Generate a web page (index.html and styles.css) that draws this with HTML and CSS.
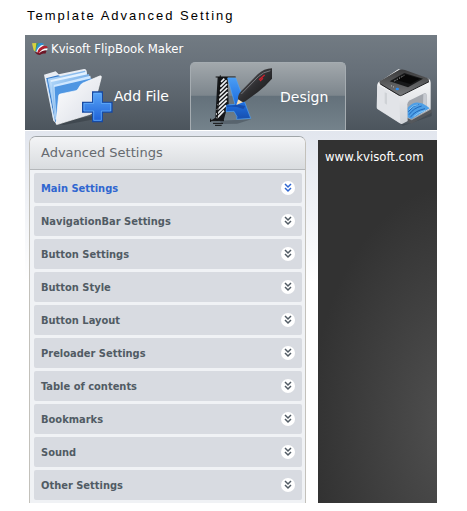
FILE: index.html
```html
<!DOCTYPE html>
<html lang="en">
<head>
    <meta charset="UTF-8">
    <meta name="viewport" content="width=device-width, initial-scale=1.0">
    <title>Template Advanced Setting</title>
    <link rel="stylesheet" href="styles.css">
</head>
<body>
    <h1 class="page-title">Template Advanced Setting</h1>
    <div class="app">
        <header class="app-header">
            <div class="title-bar">
                <svg class="logo" viewBox="93 123 54 42" aria-hidden="true">
                    <path d="M96 127l13-1 2 5-4 21-6-4z" fill="#d8d23e"/>
                    <path d="M109 127l7 0-5 27-5-3z" fill="#3f9a55"/>
                    <path d="M116 127c7-2 14-1 17 3-9 1-15 9-20 25l-6-4c2-12 4-19 9-24z" fill="#2f8fd0"/>
                    <path d="M118 138c3-5 8-7 15-7-8 5-14 13-18 25l-6-3c2-7 5-12 9-15z" fill="#f4f7fa"/>
                    <path d="M112 155c4-15 15-22 29-19l2 5c-12-1-20 5-25 18z" fill="#b4202f"/>
                    <path d="M117 157c6-10 14-15 26-14l-2 5c-9 0-15 3-20 11z" fill="#fff"/>
                    <path d="M104 152l14 5c6-7 12-9 22-8l-4 9c-8-2-12 1-16 4-6 0-13-4-16-10z" fill="#6d1526"/>
                </svg>
                <span>Kvisoft FlipBook Maker</span>
            </div>
            <nav class="tabs">
                <button type="button" class="tab tab-add">
                    <svg class="tab-icon" viewBox="51 30 216 180" aria-hidden="true">
                        <defs>
                            <linearGradient id="paper" x1="0" y1="0" x2="1" y2="1">
                                <stop offset="0" stop-color="#fff"/>
                                <stop offset="1" stop-color="#d8dce5"/>
                            </linearGradient>
                            <linearGradient id="sheet" x1="0" y1="0" x2="1" y2="1">
                                <stop offset="0" stop-color="#b8dcfb"/>
                                <stop offset="1" stop-color="#3f86d8"/>
                            </linearGradient>
                            <linearGradient id="plus" x1="0" y1="0" x2="0" y2="1">
                                <stop offset="0" stop-color="#5aa6f8"/>
                                <stop offset="1" stop-color="#1c5fd6"/>
                            </linearGradient>
                        </defs>
                        <path d="M88 202l112-22 8 10-92 17z" fill="#363d44" opacity=".6"/>
                        <path d="M57 56l35-10 9 9 76-16q6-1 8 6l5 60-97 97-8-8z" fill="#e9edf3"/>
                        <path d="M63 67l36-9 90 34-98 108z" fill="#3478c8"/>
                        <path d="M68 68l112-24 10 30-99 118z" fill="url(#sheet)"/>
                        <path d="M76 73l108-26 4 20-106 32z" fill="#e2f1ff"/>
                        <path d="M78 78l114-24 3 24-104 112z" fill="url(#sheet)"/>
                        <path d="M86 87l110-28 3 18-108 30z" fill="#cfe7ff"/>
                        <path d="M88 93l112-26 2 30-108 98z" fill="#4f96e2"/>
                        <path d="M64 68l22 122M76 76l14 114M87 90l6 100" stroke="#c7e2fb" stroke-width="2" fill="none"/>
                        <path d="M106 114l47-10q4-1 6-5l7-11q3-5 8-7l50-21q6-2 5 4l-27 104q-1 5-7 7L98 205q-6 2-5-5l8-81q0-4 5-5z" fill="url(#paper)" stroke="#fff" stroke-width="2"/>
                        <path d="M203 108h29v31h29v29h-29v29h-29v-29h-30v-29h30z" fill="url(#plus)" stroke="#174aa3" stroke-width="4"/>
                        <path d="M206 112h23v30h28v23h-28v28h-23v-28h-29v-23h29z" fill="none" stroke="#6eb8ff" stroke-width="2"/>
                    </svg>
                    <span>Add File</span>
                </button>
                <button type="button" class="tab tab-design">
                    <svg class="tab-icon" viewBox="69 33 216 180" aria-hidden="true">
                        <defs>
                            <linearGradient id="letter" x1="0" y1="0" x2="0" y2="1">
                                <stop offset="0" stop-color="#4a9df4"/>
                                <stop offset=".6" stop-color="#1f6fe0"/>
                                <stop offset="1" stop-color="#174fae"/>
                            </linearGradient>
                            <linearGradient id="pen" x1="0" y1="0" x2="1" y2="1">
                                <stop offset="0" stop-color="#6d6d70"/>
                                <stop offset=".5" stop-color="#2f2f32"/>
                                <stop offset="1" stop-color="#111"/>
                            </linearGradient>
                        </defs>
                        <path d="M104 194l95-4-42 13-46 1z" fill="#3f4a53" opacity=".5"/>
                        <path d="M98 63h30l3 82-8 22-7 26H79l12-8z" fill="#15171a"/>
                        <path d="M108 78l10-10M106 92l19-19M104 106l22-22M102 120l25-24M100 134l28-26M98 148l29-27M96 162l29-28M94 176l29-28M95 187l22-23" stroke="#edf0f2" stroke-width="5" fill="none"/>
                        <path d="M92 63h60M106 58l-10 136M75 194h42M84 202h30M90 208h20M77 188v10" stroke="#111" stroke-width="3" fill="none"/>
                        <path d="M128 66h24l45 121-42 3 1-8-9-16-24 1 2-20 25-2z" fill="url(#letter)" stroke="#4ba3fa" stroke-width="2"/>
                        <path d="M125 147q18 4 31-2l25 5-6 9q-28-10-50-6z" fill="#123e94" opacity=".6"/>
                        <path d="M154 147l7-22 16 12z" fill="#f4dfb8"/>
                        <path d="M159 130q-1-14 9-24l50-51q19-18 43-18v31q-22 25-42 40l-37 27q-6 5-11 2z" fill="url(#pen)"/>
                        <path d="M169 114l51-52q14-14 36-18" stroke="#77787d" stroke-width="3" fill="none"/>
                        <path d="M222 71l17-14M225 75l9-8" stroke="#c9202c" stroke-width="4"/>
                    </svg>
                    <span>Design</span>
                </button>
                <button type="button" class="tab tab-print" aria-label="Print">
                    <svg class="print-icon" viewBox="90 93 180 180" aria-hidden="true">
                        <defs>
                            <linearGradient id="lid" x1="0" y1="0" x2="0" y2="1">
                                <stop offset="0" stop-color="#3a3a3b"/>
                                <stop offset="1" stop-color="#77797b"/>
                            </linearGradient>
                            <linearGradient id="side" x1="0" y1="0" x2="0" y2="1">
                                <stop offset="0" stop-color="#fff"/>
                                <stop offset="1" stop-color="#cfd2d7"/>
                            </linearGradient>
                        </defs>
                        <path d="M97 218l73 50 24-3 66-34v12l-86 29z" fill="#363e45" opacity=".5"/>
                        <path d="M97 148q2-7 9-9l54-36 92 29q5 4 5 11v83l-70 33-16 8q-3 1-7-2l-66-42q-3-2-3-6z" fill="url(#side)"/>
                        <path d="M97 150l65 35 4 80-66-43q-3-2-3-6z" fill="#e2e4e8"/>
                        <path d="M119 172v33l7 4v-34z" fill="#cfd2d6"/>
                        <path d="M105 138l55-32q9-4 20-1l67 24q7 4 5 11l-83 41q-5 2-9 0l-55-34q-4-4 0-9z" fill="url(#lid)"/>
                        <path d="M106 147l57 34q3 2 7 0l82-41" stroke="#1f2022" stroke-width="3" fill="none"/>
                        <path d="M134 139l44-25 56 17-45 26z" fill="#171819"/>
                        <path d="M151 134l28-16 46 13-29 16z" fill="#080808"/>
                        <path d="M148 138l30-17" stroke="#aaa" stroke-width="3" stroke-dasharray="4 4"/>
                        <path d="M138 152l12 6" stroke="#c5c7c9" stroke-width="3" stroke-dasharray="3 4"/>
                        <ellipse cx="157" cy="162" rx="5" ry="4" fill="#2a8df5"/>
                        <path d="M187 208q0-8 8-12l40-20q10-4 10 6v42l-56 36z" fill="#a2a6ad"/>
                        <path d="M235 177q10-3 10 6v40l-11-10z" fill="#c8cbd1"/>
                        <path d="M188 218q18-20 38-14 12 2 28 16l-56 33-10-4z" fill="#4e9fe6"/>
                        <path d="M190 230q16-20 32-22M192 239q14-20 38-26M196 247q14-20 44-26" stroke="#2167b8" stroke-width="3" fill="none"/>
                        <path d="M192 224q14-15 28-15M206 245q14-14 35-19" stroke="#a5dcff" stroke-width="2" fill="none"/>
                        <path d="M188 248l12 5 57-32 3 3v9l-61 33-11-6z" fill="#55585c"/>
                        <path d="M188 248l12 6 58-32" stroke="#c6c9cd" stroke-width="2" fill="none"/>
                    </svg>
                </button>
            </nav>
        </header>
        <main class="workspace">
            <section class="panel">
                <h2 class="panel-title">Advanced Settings</h2>
                <ul class="settings">
                    <li><button type="button" class="row active">Main Settings <svg class="arrow" viewBox="0 0 14 14" aria-hidden="true"><path d="M4 3l3 3 3-3M4 7l3 3 3-3"/></svg></button></li>
                    <li><button type="button" class="row">NavigationBar Settings <svg class="arrow" viewBox="0 0 14 14" aria-hidden="true"><path d="M4 3l3 3 3-3M4 7l3 3 3-3"/></svg></button></li>
                    <li><button type="button" class="row">Button Settings <svg class="arrow" viewBox="0 0 14 14" aria-hidden="true"><path d="M4 3l3 3 3-3M4 7l3 3 3-3"/></svg></button></li>
                    <li><button type="button" class="row">Button Style <svg class="arrow" viewBox="0 0 14 14" aria-hidden="true"><path d="M4 3l3 3 3-3M4 7l3 3 3-3"/></svg></button></li>
                    <li><button type="button" class="row">Button Layout <svg class="arrow" viewBox="0 0 14 14" aria-hidden="true"><path d="M4 3l3 3 3-3M4 7l3 3 3-3"/></svg></button></li>
                    <li><button type="button" class="row">Preloader Settings <svg class="arrow" viewBox="0 0 14 14" aria-hidden="true"><path d="M4 3l3 3 3-3M4 7l3 3 3-3"/></svg></button></li>
                    <li><button type="button" class="row">Table of contents <svg class="arrow" viewBox="0 0 14 14" aria-hidden="true"><path d="M4 3l3 3 3-3M4 7l3 3 3-3"/></svg></button></li>
                    <li><button type="button" class="row">Bookmarks <svg class="arrow" viewBox="0 0 14 14" aria-hidden="true"><path d="M4 3l3 3 3-3M4 7l3 3 3-3"/></svg></button></li>
                    <li><button type="button" class="row">Sound <svg class="arrow" viewBox="0 0 14 14" aria-hidden="true"><path d="M4 3l3 3 3-3M4 7l3 3 3-3"/></svg></button></li>
                    <li><button type="button" class="row">Other Settings <svg class="arrow" viewBox="0 0 14 14" aria-hidden="true"><path d="M4 3l3 3 3-3M4 7l3 3 3-3"/></svg></button></li>
                </ul>
            </section>
            <section class="preview">www.kvisoft.com</section>
        </main>
    </div>
</body>
</html>
```
FILE: styles.css
```css
* {
    box-sizing: border-box;
}

body {
    margin: 0;
    padding: 6px 30px 8px 25px;
    background: #fff;
    font-family: "DejaVu Sans Condensed", "DejaVu Sans", Tahoma, sans-serif;
}

button {
    border: 0;
    padding: 0;
    background: none;
    font-family: inherit;
    cursor: pointer;
}

.page-title {
    margin: 0 0 9px 2px;
    font: 13px/20px "Liberation Sans", Arial, sans-serif;
    letter-spacing: 2px;
    color: #000;
    white-space: nowrap;
}

.app {
    overflow: hidden;
}

.app-header {
    background: linear-gradient(#727b83, #666f78 40%, #4c555d);
    color: #fff;
}

.title-bar {
    display: flex;
    align-items: center;
    gap: 2px;
    height: 27px;
    padding-left: 6px;
    font-size: 13px;
}

.logo {
    width: 18px;
    height: 14px;
}

.tabs {
    display: flex;
    height: 68px;
}

.tab {
    display: flex;
    align-items: center;
    flex: none;
    color: #fff;
    font-family: "DejaVu Sans", Tahoma, sans-serif;
    font-size: 14px;
}

.tab-add {
    width: 165px;
    padding-left: 17px;
}

.tab-design {
    width: 156px;
    padding-left: 17px;
    border: 1px solid #a5acb1;
    border-bottom: 0;
    border-radius: 5px 5px 0 0;
    background: linear-gradient(#a2a8ac, #7d868d 48%, #64717b 50%, #74828b);
}

.tab-print {
    padding-left: 29px;
}

.tab-icon {
    width: 72px;
    height: 60px;
}

.print-icon {
    width: 60px;
    height: 60px;
}

.workspace {
    display: flex;
    gap: 12px;
    padding: 5px 0 0 4px;
    border-top: 1px solid #fff;
    background: linear-gradient(#e2e6ee, #fff 150px);
}

.panel {
    flex: none;
    width: 277px;
    border: 1px solid #c3c1bb;
    border-top-color: #a0a5a8;
    border-bottom: 0;
    border-radius: 7px 7px 0 0;
    background: #f0f2f5;
}

.panel-title {
    margin: 0;
    padding-left: 11px;
    border-bottom: 1px solid #b4b7ba;
    border-radius: 6px 6px 0 0;
    background: linear-gradient(#f3f4f6, #d9dcdf);
    color: #666a6f;
    font-family: "DejaVu Sans", Tahoma, sans-serif;
    font-size: 13px;
    font-weight: normal;
    line-height: 32px;
}

.settings {
    display: flex;
    flex-direction: column;
    gap: 3px;
    margin: 0;
    padding: 3px 3px 3px 4px;
    list-style: none;
}

.row {
    display: flex;
    align-items: center;
    justify-content: space-between;
    width: 100%;
    height: 30px;
    padding: 0 7px;
    border-radius: 2px;
    background: #d8dbe1;
    color: #515b64;
    font-size: 11px;
    font-weight: bold;
}

.row.active {
    color: #2f66d0;
}

.arrow {
    width: 14px;
    height: 14px;
    border-radius: 50%;
    background: #fff;
    fill: none;
    stroke: currentColor;
    stroke-width: 1.5;
}

.preview {
    flex: 1;
    min-width: 0;
    margin-top: 4px;
    padding: 8px 7px;
    background: radial-gradient(ellipse 150px 240px at 120% 78%, #525252, #323232);
    color: #fff;
    font-size: 13px;
    line-height: 18px;
}
```
